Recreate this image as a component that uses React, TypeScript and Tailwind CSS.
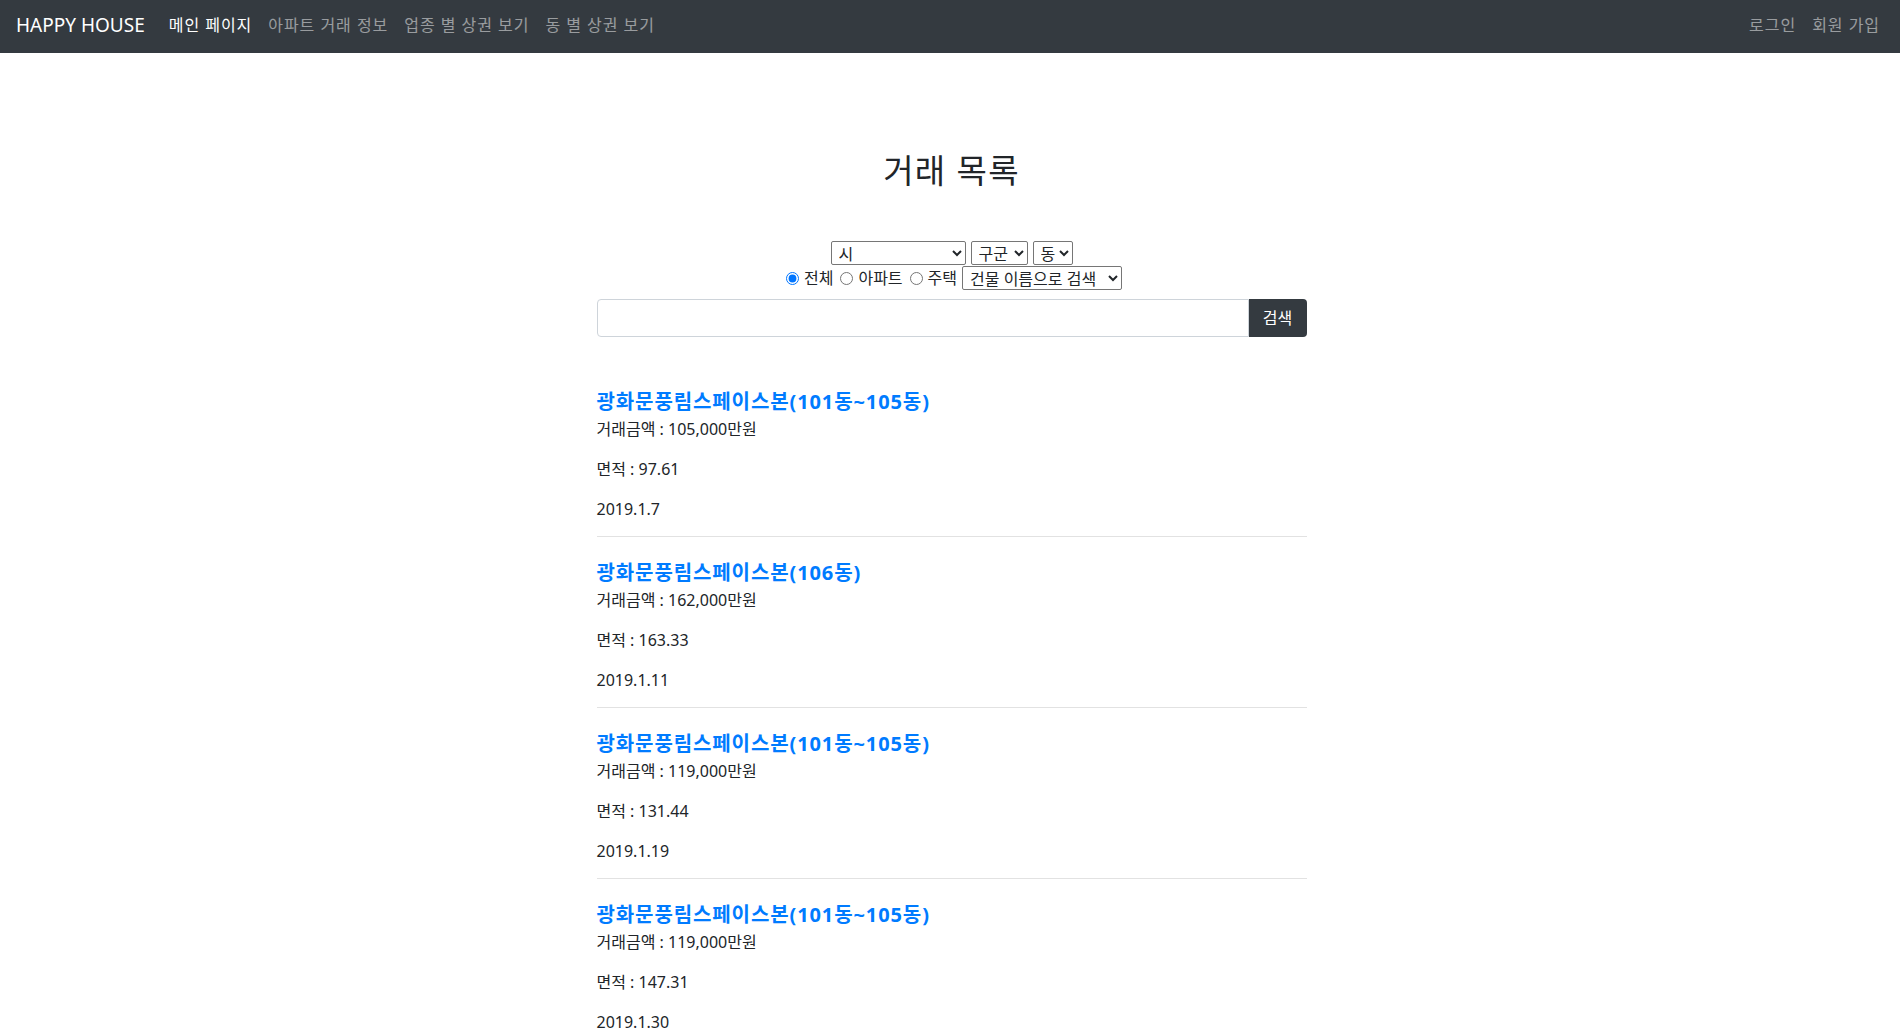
const deals = [
    {name: "광화문풍림스페이스본(101동~105동)", price: "105,000", area: "97.61", date: "2019.1.7"},
    {name: "광화문풍림스페이스본(106동)", price: "162,000", area: "163.33", date: "2019.1.11"},
    {name: "광화문풍림스페이스본(101동~105동)", price: "119,000", area: "131.44", date: "2019.1.19"},
    {name: "광화문풍림스페이스본(101동~105동)", price: "119,000", area: "147.31", date: "2019.1.30"},
];

const App = () => {
    return (
        <div className="min-h-screen bg-white text-[#212529] font-['Noto_Sans','Noto_Sans_CJK_KR',sans-serif]">
            <nav className="flex h-[53px] items-center bg-[#343a40] pl-4 pr-3 pb-[3px]">
                <a href="#" className="mr-4 text-[19px] leading-[30px] text-white">HAPPY HOUSE</a>
                <ul className="flex items-center text-base tracking-[0.06em]">
                    <li><a href="#" className="px-2 text-white">메인 페이지</a></li>
                    <li><a href="#" className="px-2 text-white/50">아파트 거래 정보</a></li>
                    <li><a href="#" className="px-2 text-white/50">업종 별 상권 보기</a></li>
                    <li><a href="#" className="px-2 text-white/50">동 별 상권 보기</a></li>
                </ul>
                <ul className="ml-auto flex items-center text-base tracking-[0.06em]">
                    <li><a href="#" className="px-2 text-white/50">로그인</a></li>
                    <li><a href="#" className="px-2 text-white/50">회원 가입</a></li>
                </ul>
            </nav>

            <main className="mx-auto flex w-[713px] flex-col pl-[3px]">
                <h2 className="mt-[99px] text-center text-[33px] leading-[38px] font-normal tracking-[0.04em]">거래 목록</h2>

                <div className="mt-[51px] flex flex-col">
                    <div className="flex h-6 items-center justify-center gap-[5px] text-base">
                        <select className="h-6 w-[135px] rounded-[2px] border border-[#767676] bg-white pl-[3px]">
                            <option>시</option>
                            <option>서울특별시</option>
                        </select>
                        <select className="h-6 w-[57px] rounded-[2px] border border-[#767676] bg-white pl-[3px]">
                            <option>구군</option>
                        </select>
                        <select className="h-6 w-[40px] rounded-[2px] border border-[#767676] bg-white pl-[3px]">
                            <option>동</option>
                        </select>
                    </div>
                    <div className="mt-px flex h-6 items-center justify-center text-base">
                        <input type="radio" name="kind" defaultChecked className="ml-[5px] mr-[5px] h-[13px] w-[13px]"/>
                        <span>전체</span>
                        <input type="radio" name="kind" className="ml-[7px] mr-[5px] h-[13px] w-[13px]"/>
                        <span>아파트</span>
                        <input type="radio" name="kind" className="ml-[7px] mr-[5px] h-[13px] w-[13px]"/>
                        <span>주택</span>
                        <select className="ml-[5px] h-6 w-[160px] rounded-[2px] border border-[#767676] bg-white pl-[3px]">
                            <option>건물 이름으로 검색</option>
                            <option>동 이름으로 검색</option>
                        </select>
                    </div>
                    <div className="mt-[9px] flex h-[38px]">
                        <input type="text" className="h-full flex-1 rounded-l-[4px] border border-[#ced4da] px-3 text-base outline-none"/>
                        <button className="h-full w-[58px] rounded-r-[4px] bg-[#343a40] text-base text-white">검색</button>
                    </div>
                </div>

                <div className="mt-[53px] flex flex-col divide-y divide-[#e2e2e2]">
                    {deals.map((d, i) => (
                        <div key={i} className="pt-[24px] pb-[15px] first:pt-0 last:pb-0">
                            <h5 className="text-xl leading-6 font-bold tracking-[0.045em] text-[#007bff]">{d.name}</h5>
                            <div className="mt-[3px] flex flex-col gap-4 text-base leading-6">
                                <p>거래금액 : {d.price}만원</p>
                                <p>면적 : {d.area}</p>
                                <p>{d.date}</p>
                            </div>
                        </div>
                    ))}
                </div>
            </main>
        </div>
    )
};

export default App;
